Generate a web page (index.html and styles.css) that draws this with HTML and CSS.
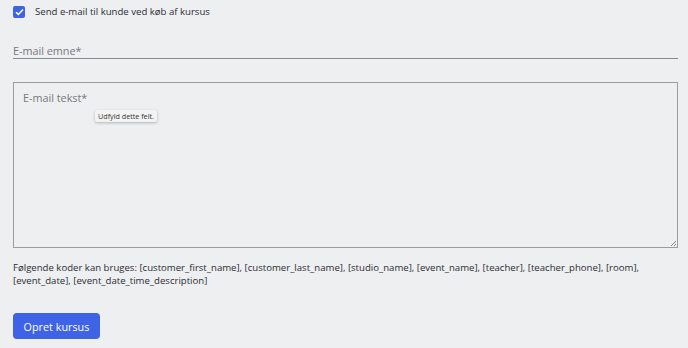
FILE: index.html
```html
<!DOCTYPE html>
<html lang="da">
<head>
    <meta charset="UTF-8">
    <meta name="viewport" content="width=device-width, initial-scale=1.0">
    <title>Opret kursus</title>
    <link rel="stylesheet" href="styles.css">
</head>
<body>
    <form class="course-form">
        <label class="check-row">
            <span class="check-box">
                <svg width="9" height="8" viewBox="0 0 9 8"><path d="M1 4.2 L3.4 6.4 L8 1.4" fill="none" stroke="#fff" stroke-width="1.5"/></svg>
            </span>
            Send e-mail til kunde ved køb af kursus
        </label>

        <div class="line-field">
            <span class="field-label">E-mail emne*</span>
        </div>

        <div class="text-field">
            <span class="field-label">E-mail tekst*</span>
            <div class="tooltip">Udfyld dette felt.</div>
            <span class="resize-grip"></span>
        </div>

        <p class="codes">Følgende koder kan bruges: [customer_first_name], [customer_last_name], [studio_name], [event_name], [teacher], [teacher_phone], [room], [event_date], [event_date_time_description]</p>

        <button type="button" class="submit-btn">Opret kursus</button>
    </form>
</body>
</html>
```

FILE: styles.css
```css
body {
    margin: 0;
    background-color: #eeeff1;
    font-family: "Open Sans", sans-serif;
    color: #2b2d33;
}

.course-form {
    padding: 5px 10px 0 13px;
    display: flex;
    flex-direction: column;
}

.check-row {
    display: flex;
    align-items: center;
    gap: 10px;
    font-size: 9.6px;
    height: 13px;
}

.check-box {
    width: 12px;
    height: 12px;
    background-color: #3e63e6;
    border-radius: 2px;
    display: flex;
    align-items: center;
    justify-content: center;
}

.line-field {
    margin-top: 20px;
    height: 20px;
    border-bottom: 1px solid #8a8b8f;
}

.field-label {
    font-size: 10.8px;
    color: #77787c;
}

.text-field {
    position: relative;
    margin-top: 23px;
    height: 160px;
    border: 1px solid #9b9ca0;
    padding: 2px 9px 2px;
}

.tooltip {
    position: absolute;
    left: 81px;
    top: 27px;
    font-size: 7.2px;
    color: #333;
    background: #f3f3f3;
    padding: 1px 3px;
    border-radius: 2px;
    box-shadow: 0 1px 3px rgba(0,0,0,0.25);
}

.resize-grip {
    position: absolute;
    right: 1px;
    bottom: 1px;
    width: 5px;
    height: 5px;
    background: linear-gradient(135deg, transparent 45%, #888 45%, #888 55%, transparent 55%, transparent 70%, #888 70%, #888 80%, transparent 80%);
}

.codes {
    margin: 13px 0 0;
    font-size: 9.6px;
    line-height: 13px;
    color: #2b2d33;
}

.submit-btn {
    align-self: flex-start;
    margin-top: 26px;
    width: 87px;
    height: 26px;
    border: none;
    border-radius: 4px;
    background-color: #3e63e6;
    color: #fff;
    font-family: "Open Sans", sans-serif;
    font-size: 10.8px;
}
```
